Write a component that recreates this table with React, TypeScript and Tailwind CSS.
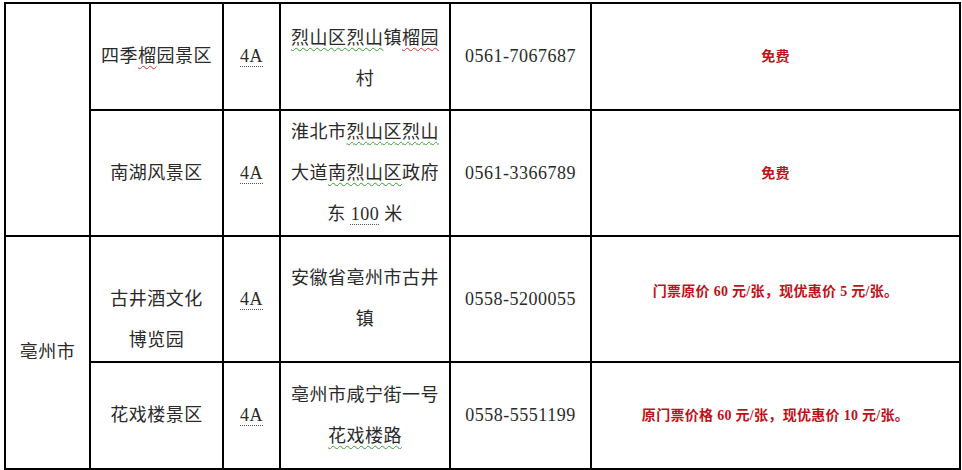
const serif = "font-['Liberation_Serif','Noto_Sans_CJK_SC',serif]";

function Green({ children }: { children: React.ReactNode }) {
  return (
    <span className="underline decoration-wavy decoration-[#3a9a3a] decoration-[1px] underline-offset-[3px]">
      {children}
    </span>
  );
}

function Red({ children }: { children: React.ReactNode }) {
  return (
    <span className="underline decoration-wavy decoration-[#d23030] decoration-[1px] underline-offset-[3px]">
      {children}
    </span>
  );
}

function Dotted({ children }: { children: React.ReactNode }) {
  return (
    <span className="underline decoration-dotted decoration-[#555] decoration-[1px] underline-offset-[4px]">
      {children}
    </span>
  );
}

const cell = "border-2 border-black text-center align-middle p-0";
const body = "text-[18px] leading-[41px] tracking-[0.5px] text-[#2a2a2a]";
const price = "text-[14px] font-bold text-[#c0101a] tracking-[0.3px]";

export default function App() {
  return (
    <div className={`w-[962px] h-[470px] bg-white pl-[4px] pt-[2px] ${serif}`}>
      <table className="table-fixed border-collapse w-[955px]">
        <colgroup>
          <col className="w-[85px]" />
          <col className="w-[133px]" />
          <col className="w-[57px]" />
          <col className="w-[170px]" />
          <col className="w-[141px]" />
          <col className="w-[369px]" />
        </colgroup>
        <tbody>
          <tr className="h-[107px]">
            <td rowSpan={2} className={cell} />
            <td className={`${cell} ${body}`}>
              四季<Red>榴</Red>园景区
            </td>
            <td className={`${cell} ${body}`}>
              <Dotted>4A</Dotted>
            </td>
            <td className={`${cell} ${body} pt-[4px]`}>
              <Green>烈山区烈山</Green>镇<Red>榴园</Red>
              <br />村
            </td>
            <td className={`${cell} ${body}`}>0561-7067687</td>
            <td className={`${cell} ${price}`}>免费</td>
          </tr>
          <tr className="h-[126px]">
            <td className={`${cell} ${body}`}>南湖风景区</td>
            <td className={`${cell} ${body}`}>
              <Dotted>4A</Dotted>
            </td>
            <td className={`${cell} ${body}`}>
              淮北市<Green>烈山区烈山</Green>
              <br />
              大道<Green>南烈山区</Green>政府
              <br />东 <Dotted>100</Dotted> 米
            </td>
            <td className={`${cell} ${body}`}>0561-3366789</td>
            <td className={`${cell} ${price}`}>免费</td>
          </tr>
          <tr className="h-[125px]">
            <td rowSpan={2} className={`${cell} ${body}`}>
              亳州市
            </td>
            <td className={`${cell} ${body} pt-[42px]`}>
              古井酒文化
              <br />
              博览园
            </td>
            <td className={`${cell} ${body}`}>
              <Dotted>4A</Dotted>
            </td>
            <td className={`${cell} ${body}`}>
              安徽省亳州市古井
              <br />镇
            </td>
            <td className={`${cell} ${body}`}>0558-5200055</td>
            <td className={`${cell} ${price} pb-[16px]`}>
              门票原价 60 元/张，现优惠价 5 元/张。
            </td>
          </tr>
          <tr className="h-[107px]">
            <td className={`${cell} ${body}`}>花戏楼景区</td>
            <td className={`${cell} ${body}`}>
              <Dotted>4A</Dotted>
            </td>
            <td className={`${cell} ${body}`}>
              亳州市咸宁街一号
              <br />
              <Green>花戏楼路</Green>
            </td>
            <td className={`${cell} ${body}`}>0558-5551199</td>
            <td className={`${cell} ${price}`}>
              原门票价格 60 元/张，现优惠价 10 元/张。
            </td>
          </tr>
        </tbody>
      </table>
    </div>
  );
}
